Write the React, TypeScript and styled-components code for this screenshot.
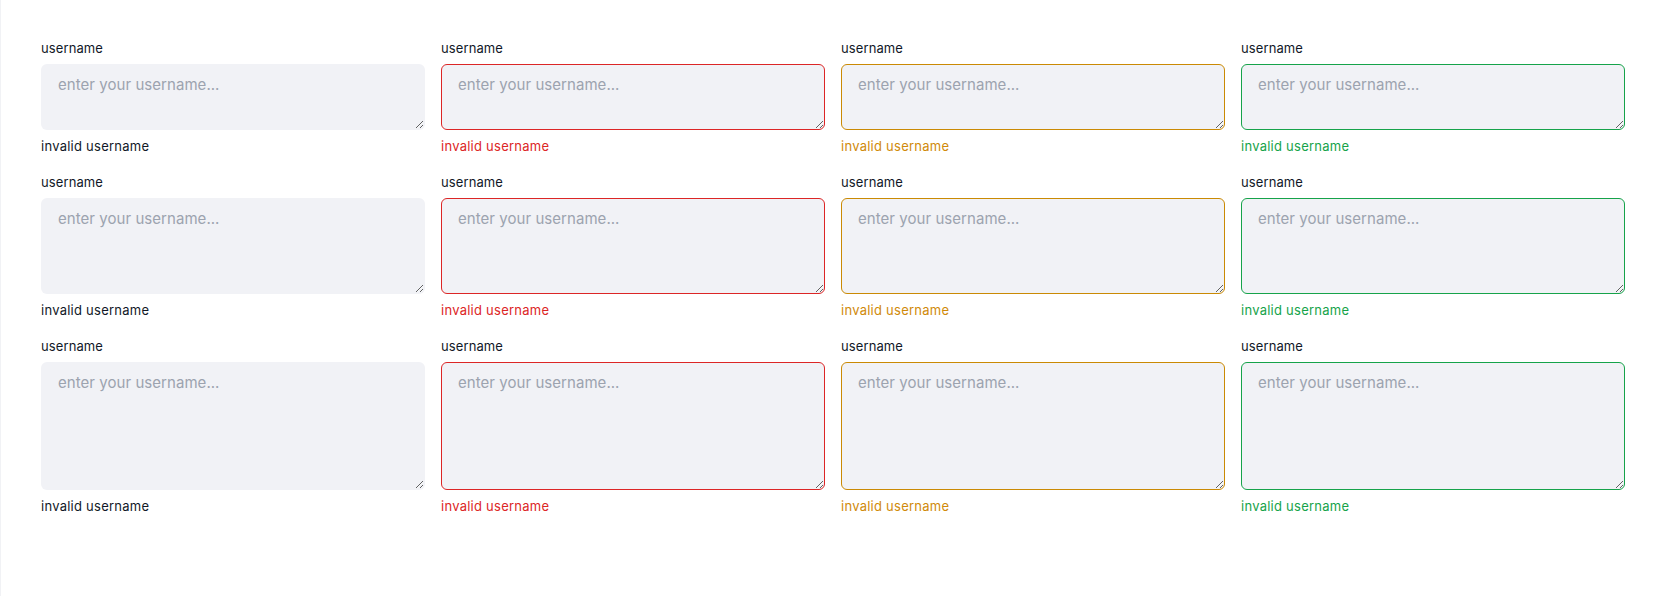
import React from "react";
import styled, { createGlobalStyle, css } from "styled-components";

const GlobalStyle = createGlobalStyle`
  html, body { margin: 0; padding: 0; background: #ffffff; }
  body { font-family: Inter, "Noto Sans", sans-serif; color: #111827; }
  * { box-sizing: border-box; }
`;

type Variant = "default" | "error" | "warning" | "success";

const tones: Record<Variant, { border: string; text: string }> = {
  default: { border: "transparent", text: "#111827" },
  error: { border: "#dc2626", text: "#dc2626" },
  warning: { border: "#ca8a04", text: "#d08a0a" },
  success: { border: "#16a34a", text: "#16a34a" },
};

const Page = styled.main`
  min-height: 596px;
  border-left: 1px solid #f1f2f5;
  padding: 38px 39px 0 40px;
`;

const Grid = styled.div`
  display: grid;
  grid-template-columns: repeat(4, 1fr);
  column-gap: 16px;
  row-gap: 16px;
`;

const Field = styled.div`
  display: flex;
  flex-direction: column;
  gap: 6px;
`;

const Label = styled.label`
  font-size: 13px;
  line-height: 20px;
  letter-spacing: 0.1px;
  color: #111827;
`;

const TextArea = styled.textarea<{ $variant: Variant; $height: number }>`
  display: block;
  width: 100%;
  height: ${(p) => p.$height}px;
  padding: 10px 16px 8px;
  font-family: Inter, "Noto Sans", sans-serif;
  font-size: 15px;
  line-height: 20px;
  letter-spacing: 0.05px;
  color: #111827;
  background: #f1f2f6;
  border: 1px solid ${(p) => tones[p.$variant].border};
  border-radius: 6px;
  outline: none;
  resize: vertical;
  &::placeholder {
    color: #9ca3af;
  }
`;

const Message = styled.span<{ $variant: Variant }>`
  font-size: 13px;
  line-height: 20px;
  letter-spacing: 0.25px;
  ${(p) => css`
    color: ${tones[p.$variant].text};
  `}
`;

const variants: Variant[] = ["default", "error", "warning", "success"];
const heights = [66, 96, 128];

export default function App() {
  return (
    <>
      <GlobalStyle />
      <Page>
        <Grid>
          {heights.map((h) =>
            variants.map((v) => (
              <Field key={`${h}-${v}`}>
                <Label>username</Label>
                <TextArea
                  $variant={v}
                  $height={h}
                  placeholder="enter your username..."
                />
                <Message $variant={v}>invalid username</Message>
              </Field>
            ))
          )}
        </Grid>
      </Page>
    </>
  );
}
